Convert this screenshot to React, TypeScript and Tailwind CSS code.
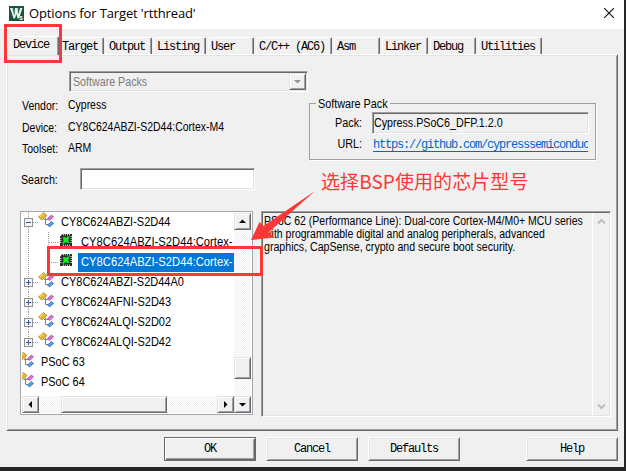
import { ReactNode } from 'react';

const sans = 'font-["Liberation_Sans",sans-serif]';
const mono = 'font-["Liberation_Mono",monospace] text-[12px] tracking-[-1.2px]';
const raised =
  'bg-[#f0f0f0] border border-t-[#e3e3e3] border-l-[#e3e3e3] border-r-[#696969] border-b-[#696969] shadow-[inset_1px_1px_0_#fff,inset_-1px_-1px_0_#a0a0a0]';
const sunken =
  'border border-t-[#a0a0a0] border-l-[#a0a0a0] border-r-white border-b-white shadow-[inset_1px_1px_0_#696969,inset_-1px_-1px_0_#e3e3e3]';
const dither = 'bg-[repeating-conic-gradient(#fff_0_25%,#f0f0f0_0_50%)] bg-[length:2px_2px]';

function Label({ children, className = 'scale-x-[0.873]' }: { children: ReactNode; className?: string }) {
  return (
    <span className={`inline-block origin-left whitespace-nowrap text-[12px] ${className}`}>
      {children}
    </span>
  );
}

function Logo() {
  return (
    <svg width="15" height="15" viewBox="0 0 15 15" className="shrink-0">
      <rect width="15" height="15" fill="#17563d" />
      <path d="M1 2h3l1.5 6L6 2h3l.5 6L11 2h2.5L10 12.5H8.6L7.3 8 6 12.5H4.6z" fill="#e9f3ee" />
      <path d="M4 2.5 5.5 9M9 2.5l.6 5" stroke="#17563d" strokeWidth=".7" />
      <text x="10.2" y="13.6" fontSize="6.5" fontWeight="700" fill="#fff" fontFamily="Liberation Sans, sans-serif">s</text>
    </svg>
  );
}

const tabs = [
  { label: 'Target', width: 'w-[45px]' },
  { label: 'Output', width: 'w-[48px]' },
  { label: 'Listing', width: 'w-[54px]' },
  { label: 'User', width: 'w-[48px]' },
  { label: 'C/C++ (AC6)', width: 'w-[78px]' },
  { label: 'Asm', width: 'w-[48px]' },
  { label: 'Linker', width: 'w-[48px]' },
  { label: 'Debug', width: 'w-[48px]' },
  { label: 'Utilities', width: 'w-[66px]' },
];

function Tabs() {
  return (
    <div className={`flex h-[25px] items-end pl-[6px] ${mono}`}>
      <div className="z-10 -mb-px h-[19px] w-[53px] rounded-t-[2px] border-t border-r border-l border-t-white border-r-[#696969] border-l-white bg-[#f0f0f0] pl-[6px] leading-[17px] shadow-[inset_-1px_0_0_#a0a0a0]">
        Device
      </div>
      {tabs.map((t, i) => (
        <div key={t.label} className={`h-[17px] shrink-0 ${t.width} ${i === 0 ? '' : 'pl-[2px]'}`}>
          <div className="h-full rounded-t-[2px] border-t border-r border-l border-t-white border-r-[#696969] border-l-[#fafafa] pl-[2px] leading-[18px] whitespace-nowrap shadow-[inset_-1px_0_0_#a0a0a0]">
            {t.label}
          </div>
        </div>
      ))}
    </div>
  );
}

function FamilyIcon({ cut = false }: { cut?: boolean }) {
  return (
    <svg width={cut ? 12 : 16} height="16" viewBox={cut ? '4 0 12 16' : '0 0 16 16'} className="shrink-0">
      <path d="M7.5 5.5v7H11M6 7.5h5" fill="none" stroke="#7d8790" />
      <path d="m.5 5 5-4.5 3.500 3-5 4.500z" fill="#e5b62e" stroke="#a77b16" strokeWidth=".7" />
      <path d="m2 4.500 3.500-3" stroke="#ffeaa0" />
      <path d="m9.500 6.500 4-3.500 2 2-4 3.500z" fill="#e26bdd" stroke="#a23ca8" strokeWidth=".7" />
      <path d="m9.500 13 4-3.500 2 2-4 3.500z" fill="#5b9fe5" stroke="#24669f" strokeWidth=".7" />
    </svg>
  );
}

function ChipIcon() {
  return (
    <svg width="12" height="12" viewBox="0 0 12 12" className="shrink-0">
      <path d="M2.5 0H12v12H0V2.5z" fill="#2b2b2b" />
      <path
        d="M3.5 0v1.5M5.5 0v1.5M7.5 0v1.5M9.5 0v1.5M0 4.5h1.5M0 6.5h1.5M0 8.5h1.5M10.5 2.5H12M10.5 4.5H12M10.5 6.5H12M10.5 8.5H12M3.5 10.5V12M5.5 10.5V12M7.5 10.5V12M9.5 10.5V12"
        stroke="#c4c4c4"
      />
      <path d="M3 3h2l1 1 1.500-1.500H10L8.500 5v2l1 2H7.500L6 8 4 9.500 2 10l1.500-3z" fill="#12ed20" />
    </svg>
  );
}

function Expander({ open = false }: { open?: boolean }) {
  return (
    <svg width="9" height="9" viewBox="0 0 9 9" shapeRendering="crispEdges" className="shrink-0">
      <rect x=".5" y=".5" width="8" height="8" fill="#f4f4f4" stroke="#919191" />
      <path d={open ? 'M2 4.5h5' : 'M2 4.5h5M4.5 2v5'} stroke="#3b57a5" />
    </svg>
  );
}

const dots = 'bg-[repeating-linear-gradient(90deg,#9a9a9a_0_1px,transparent_1px_2px)]';
const vdots = 'bg-[repeating-linear-gradient(180deg,#9a9a9a_0_1px,transparent_1px_2px)]';

function FamilyRow({ name, open, last }: { name: string; open?: boolean; last?: boolean }) {
  return (
    <div className="flex h-[20px] items-center pl-[2px]">
      <div className="flex h-full w-[9px] flex-col items-center">
        <div className={`h-[6px] w-px ${vdots}`} />
        <Expander open={open} />
        {!last && <div className={`h-[5px] w-px ${vdots}`} />}
      </div>
      <div className={`h-px w-[5px] ${dots}`} />
      <div className="-mt-[4px] flex"><FamilyIcon /></div>
      <Label className="ml-[7px] scale-x-[0.917]">{name}</Label>
    </div>
  );
}

function DeviceRow({ selected }: { selected?: boolean }) {
  return (
    <div className="flex h-[20px] items-center pl-[6px]">
      <div className={`h-full w-px ${vdots}`} />
      <div className={`ml-[19px] w-px ${vdots} ${selected ? 'mb-[10px] h-[10px]' : 'h-full'}`} />
      <div className={`mr-[2px] h-px w-[9px] ${dots}`} />
      <div className="-mt-[4px] flex"><ChipIcon /></div>
      <div className={`ml-[6px] flex h-[19px] w-[156px] items-center pl-[3px] ${selected ? 'bg-[#0078d7] text-white' : ''}`}>
        <Label className="w-[152px] scale-x-[0.935]">CY8C624ABZI-S2D44:Cortex-</Label>
      </div>
    </div>
  );
}

const arrows = {
  up: 'M3 8h7L6.5 4.5z',
  down: 'M3 5h7L6.5 8.5z',
  left: 'M8 3v7L4.5 6.5z',
  right: 'M5 3v7l3.5-3.5z',
};

function ArrowButton({ dir, color = '#000' }: { dir: keyof typeof arrows; color?: string }) {
  return (
    <div className={`flex h-[17px] w-[17px] shrink-0 items-center justify-center ${raised}`}>
      <svg width="13" height="13" viewBox="0 0 13 13" className="shrink-0">
        <path d={arrows[dir]} fill={color} />
      </svg>
    </div>
  );
}

function DeviceTree() {
  return (
    <div className="flex h-[204px] w-[233px] border border-[#a3a7b0] bg-white p-px">
      <div className="flex w-[212px] flex-col">
        <div className="-mt-px h-[184px]">
          <FamilyRow name="CY8C624ABZI-S2D44" open />
          <DeviceRow />
          <DeviceRow selected />
          <FamilyRow name="CY8C624ABZI-S2D44A0" />
          <FamilyRow name="CY8C624AFNI-S2D43" />
          <FamilyRow name="CY8C624ALQI-S2D02" />
          <FamilyRow name="CY8C624ALQI-S2D42" last />
          {['PSoC 63', 'PSoC 64'].map((n) => (
            <div key={n} className="flex h-[20px] items-center">
              <div className="-mt-[4px] flex"><FamilyIcon cut /></div>
              <Label className="ml-[7px] scale-x-[0.91]">{n}</Label>
            </div>
          ))}
        </div>
        <div className={`flex h-[17px] ${dither}`}>
          <ArrowButton dir="left" />
          <div className={`ml-[22px] w-[106px] ${raised}`} />
          <div className="flex-1" />
          <ArrowButton dir="right" />
        </div>
      </div>
      <div className={`flex w-[17px] flex-col ${dither}`}>
        <ArrowButton dir="up" />
        <div className={`mt-[127px] h-[22px] ${raised}`} />
        <div className="flex-1" />
        <ArrowButton dir="down" />
      </div>
    </div>
  );
}

function Description() {
  return (
    <div className={`ml-[8px] flex h-[206px] w-[350px] ${sunken}`}>
      <div className="w-[330px] pt-[3px] pl-[2px] text-[12px] leading-[13px]">
        <Label className="block scale-x-[0.873]">PSoC 62 (Performance Line): Dual-core Cortex-M4/M0+ MCU series</Label>
        <Label className="block scale-x-[0.875]">with programmable digital and analog peripherals, advanced</Label>
        <Label className="block scale-x-[0.885]">graphics, CapSense, crypto and secure boot security.</Label>
      </div>
      <div className="my-px flex w-[17px] flex-col items-center justify-between border-l border-white py-[5px]">
        <svg width="9" height="7" viewBox="0 0 9 7"><path d="m1 5.5 3.5-3.5L8 5.5" fill="none" stroke="#bdbdbd" strokeWidth="2" /></svg>
        <svg width="9" height="7" viewBox="0 0 9 7"><path d="m1 1.5 3.5 3.5L8 1.5" fill="none" stroke="#bdbdbd" strokeWidth="2" /></svg>
      </div>
    </div>
  );
}

function SoftwarePack() {
  return (
    <fieldset className="mt-[41px] h-[64px] w-[287px] border border-[#a0a0a0] pl-[6px] shadow-[1px_1px_0_#fff]">
      <legend className="h-[14px] w-[74px] px-[2px] leading-[14px]"><Label className="scale-x-[0.9]">Software Pack</Label></legend>
      <div className="mt-[2px] flex h-[22px] items-center">
        <Label className="w-[56px] origin-right scale-x-[0.9] pr-[11px] text-right">Pack:</Label>
        <div className={`flex h-[22px] w-[217px] items-center pl-[1px] ${sunken}`}>
          <Label className="scale-x-[0.89]">Cypress.PSoC6_DFP.1.2.0</Label>
        </div>
      </div>
      <div className="flex h-[20px] items-center">
        <Label className="w-[56px] origin-right scale-x-[0.9] pr-[11px] text-right">URL:</Label>
        <div className={`ml-[1px] h-[16px] w-[215px] overflow-hidden pt-[2px] leading-[14px] whitespace-nowrap text-[#0066cc] ${mono}`}>
          <span className="block h-[14px] border-b border-[#0066cc]">https://github.com/cypresssemiconduc</span>
        </div>
      </div>
    </fieldset>
  );
}

function Field({ label, value, h }: { label: string; value: string; h: string }) {
  return (
    <div className={`flex items-center ${h}`}>
      <div className="w-[46px]"><Label>{label}</Label></div>
      <Label>{value}</Label>
    </div>
  );
}

function DialogButton({ label, className = '', primary }: { label: string; className?: string; primary?: boolean }) {
  return (
    <button
      className={`h-[24px] w-[92px] ${mono} ${className} ${
        primary
          ? 'border border-[#696969] bg-[#f0f0f0] shadow-[inset_1px_1px_0_#fff,inset_-1px_-1px_0_#696969,inset_-2px_-2px_0_#a0a0a0]'
          : 'border border-t-white border-l-white border-r-[#696969] border-b-[#696969] bg-[#f0f0f0] shadow-[inset_1px_1px_0_#e3e3e3,inset_-1px_-1px_0_#a0a0a0]'
      }`}
    >
      {label}
    </button>
  );
}

export default function App() {
  return (
    <div className={`relative h-[471px] w-[626px] overflow-hidden bg-[#262626] text-black ${sans}`}>
      <div className="flex h-[467px] w-[624px] flex-col bg-[#f0f0f0]">
        <header className="flex h-[29px] shrink-0 items-center bg-white pr-[10px] pl-[9px]">
          <div className="-mt-[2px] flex"><Logo /></div>
          <h1 className='-mt-[3px] ml-[5px] flex-1 font-["Open_Sans",sans-serif] text-[13px] leading-[20px] tracking-[-0.13px] whitespace-nowrap'>Options for Target 'rtthread'</h1>
          <svg width="10" height="10" viewBox="0 0 10 10" className="-mt-[3px]"><path d="m0 0 10 10M10 0 0 10" stroke="#111" strokeWidth="1.1" /></svg>
        </header>
        <Tabs />
        <main className="ml-[6px] h-[377px] w-[612px] shrink-0 border border-t-white border-l-white border-r-[#696969] border-b-[#696969] pl-[13px] shadow-[inset_1px_1px_0_#e3e3e3,inset_-1px_-1px_0_#a0a0a0]">
          <div className="flex h-[156px]">
            <div className="w-[289px] pt-[16px]">
              <div className={`ml-[49px] flex h-[21px] w-[239px] items-center justify-between pr-px pl-[3px] text-[#7b7b7b] ${sunken}`}>
                <Label className="scale-x-[0.89]">Software Packs</Label>
                <ArrowButton dir="down" color="#969696" />
              </div>
              <div className="mt-[2px] pl-[2px]">
                <Field label="Vendor:" value="Cypress" h="h-[22px]" />
                <Field label="Device:" value="CY8C624ABZI-S2D44:Cortex-M4" h="h-[22px]" />
                <Field label="Toolset:" value="ARM" h="h-[20px]" />
              </div>
              <div className="mt-[9px] flex items-center pl-[1px]">
                <div className="w-[59px]"><Label className="scale-x-[0.89]">Search:</Label></div>
                <input className={`h-[22px] w-[175px] bg-white ${sunken}`} />
              </div>
            </div>
            <SoftwarePack />
          </div>
          <div className="flex items-start">
            <DeviceTree />
            <Description />
          </div>
        </main>
        <footer className="flex pt-[6px] pl-[164px]">
          <DialogButton label="OK" primary />
          <DialogButton label="Cancel" className="ml-[10px]" />
          <DialogButton label="Defaults" className="ml-[10px]" />
          <DialogButton label="Help" className="ml-[66px]" />
        </footer>
      </div>

      <div className="absolute top-[24px] left-[4px] z-20 h-[39px] w-[58px] border-3 border-[#fb3838]" />
      <div className="absolute top-[246px] left-[47px] z-20 h-[30px] w-[216px] border-3 border-[#fb3838]" />
      <svg className="absolute top-[185px] left-[245px] z-20" width="75" height="60" viewBox="245 185 75 60">
        <path d="m251 240 8.5-18 4 4L315 191l-46 41 5 5.5z" fill="#fb3838" />
      </svg>
      <div className='absolute top-[167px] left-[321px] z-20 font-["Noto_Sans_CJK_SC",sans-serif] text-[19px] leading-[28px] tracking-[0.08px] whitespace-nowrap text-[#fb3838]'>选择BSP使用的芯片型号</div>
    </div>
  );
}
